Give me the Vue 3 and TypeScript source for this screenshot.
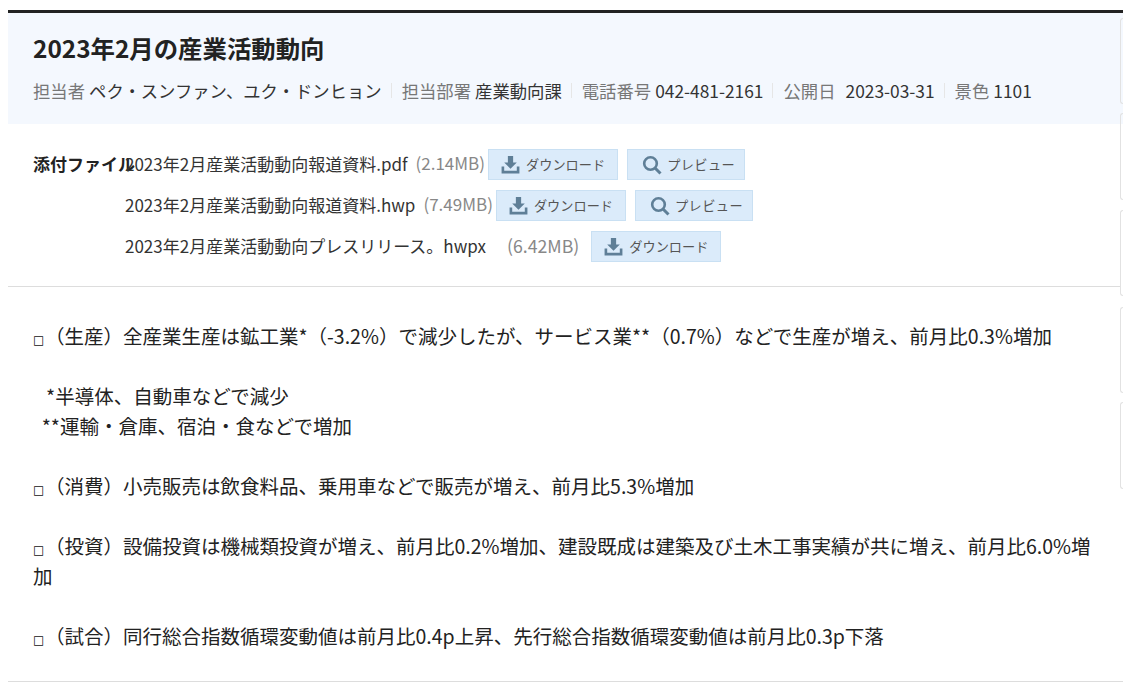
<script setup lang="ts">
interface FileRow { name: string; size: string; preview: boolean; wide: boolean }
const meta = [
  { label: '担当者', value: 'ペク・スンファン、ユク・ドンヒョン', wide: false },
  { label: '担当部署', value: '産業動向課', wide: false },
  { label: '電話番号', value: '042-481-2161', wide: false },
  { label: '公開日', value: '2023-03-31', wide: true },
  { label: '景色', value: '1101', wide: false },
]
const files: FileRow[] = [
  { name: '2023年2月産業活動動向報道資料.pdf', size: '(2.14MB)', preview: true, wide: false },
  { name: '2023年2月産業活動動向報道資料.hwp', size: '(7.49MB)', preview: true, wide: false },
  { name: '2023年2月産業活動動向プレスリリース。hwpx', size: '(6.42MB)', preview: false, wide: true },
]
</script>

<template>
  <div class="page">
    <div class="board">
      <header class="head">
        <h1>2023年2月の産業活動動向</h1>
        <ul class="meta">
          <li v-for="m in meta" :key="m.label"><span class="k">{{ m.label }}</span><span class="v" :class="{ wide: m.wide }">{{ m.value }}</span></li>
        </ul>
      </header>
      <section class="files">
        <strong class="flabel">添付ファイル</strong>
        <div class="flist">
          <div v-for="f in files" :key="f.name" class="frow">
            <span class="fname">{{ f.name }}</span>
            <span class="fsize" :class="{ wide: f.wide }">{{ f.size }}</span>
            <a class="btn">
              <svg viewBox="0 0 20 20" width="21" height="21"><path d="M7.5 2h5v6h3.500L10 14 4 8h3.500z" fill="#5f7f97"/><path d="M1.500 12h2.500v4h12v-4h2.500v6.500H1.500z" fill="#5f7f97"/></svg>
              ダウンロード
            </a>
            <a v-if="f.preview" class="btn pv">
              <svg viewBox="0 0 20 20" width="20" height="20"><circle cx="8.500" cy="8.500" r="6.300" fill="none" stroke="#5f7f97" stroke-width="2.600"/><path d="M13 13l5.500 5.500" stroke="#5f7f97" stroke-width="3"/></svg>
              <span class="pvt">プレビュー</span>
            </a>
          </div>
        </div>
      </section>
      <article class="body">
        <p><span class="sq">□</span>（生産）全産業生産は鉱工業*（-3.2%）で減少したが、サービス業**（0.7%）などで生産が増え、前月比0.3%増加</p>
        <p>&nbsp;</p>
        <p>&nbsp; &nbsp;*半導体、自動車などで減少</p>
        <p>&nbsp; **運輸・倉庫、宿泊・食などで増加</p>
        <p>&nbsp;</p>
        <p><span class="sq">□</span>（消費）小売販売は飲食料品、乗用車などで販売が増え、前月比5.3%増加</p>
        <p>&nbsp;</p>
        <p><span class="sq">□</span>（投資）設備投資は機械類投資が増え、前月比0.2%増加、建設既成は建築及び土木工事実績が共に増え、前月比6.0%増加</p>
        <p>&nbsp;</p>
        <p><span class="sq">□</span>（試合）同行総合指数循環変動値は前月比0.4p上昇、先行総合指数循環変動値は前月比0.3p下落</p>
      </article>
    </div>
    <div class="side">
      <i class="s1"></i><i class="s2"></i><i class="s3"></i><i class="s4"></i><i class="s5"></i>
    </div>
  </div>
</template>

<style>
html, body { margin: 0; background: #fff; overflow: hidden; }
</style>
<style scoped>
.page { width: 1123px; height: 684px; overflow: hidden; position: relative; font-family: "Noto Sans CJK JP", "Noto Sans", sans-serif; color: #222; background: #fff; }
.board { margin-left: 8px; margin-top: 10px; border-top: 3px solid #222; height: 672px; border-bottom: 1px solid #ddd; box-sizing: border-box; }
.head { background: #f4f8fe; height: 111px; padding: 18px 25px 0; box-sizing: border-box; }
h1 { margin: 0; font-size: 24.400px; line-height: 34px; font-weight: 700; color: #222; letter-spacing: 0; }
.meta { list-style: none; margin: 13px 0 0; padding: 0; display: flex; font-size: 17.350px; line-height: 26px; white-space: nowrap; }
.meta li { display: flex; gap: 4px; padding-right: 10px; margin-right: 10px; position: relative; }
.meta li:not(:last-child)::after { content: ""; position: absolute; right: 0; top: 5px; height: 15px; width: 1px; background: #e6e6e6; }
.k { color: #777; }
.v { color: #333; }
.v.wide { margin-left: 6px; }
.files { display: flex; height: 163px; margin-right: 3px; box-sizing: border-box; padding: 25px 0 0 25px; border-bottom: 1px solid #ddd; }
.flabel { font-size: 17px; line-height: 30px; width: 92px; flex: none; white-space: nowrap; color: #222; }
.flist { display: flex; flex-direction: column; gap: 10px; }
.frow { display: flex; align-items: center; height: 31px; font-size: 17px; line-height: 24px; color: #333; white-space: nowrap; }
.fname { position: relative; top: -1px; }
.fsize { color: #888; margin-left: 8px; margin-right: 3px; position: relative; top: -2px; }
.fsize.wide { font-size: 17.700px; margin-left: 21px; margin-right: 12px; }
.btn { display: inline-flex; align-items: center; gap: 5px; height: 31px; box-sizing: border-box; padding: 0 12px 0 11px; background: #dbebfa; border: 1px solid #c9e0f3; font-size: 13.200px; color: #555; }
.pv { margin-left: 9px; padding: 0 9px 0 14px; }
.pvt { letter-spacing: 0.400px; }
.body { padding: 34px 25px 0; font-size: 19.500px; line-height: 30px; color: #222; margin-right: 3px; }
.body p { margin: 0; }
.sq { display: inline-block; width: 12px; font-family: "DejaVu Sans", sans-serif; font-size: 12px; line-height: 1; font-weight: 700; color: #111; }
.side i { position: absolute; right: 0; width: 2px; border: 1px solid #e2e2e2; border-right: 0; border-radius: 4px 0 0 4px; }
.s1 { top: 18px; height: 84px; }
.s2 { top: 113px; height: 85px; }
.s3 { top: 210px; height: 84px; }
.s4 { top: 307px; height: 84px; }
.s5 { top: 402px; height: 85px; }
</style>
